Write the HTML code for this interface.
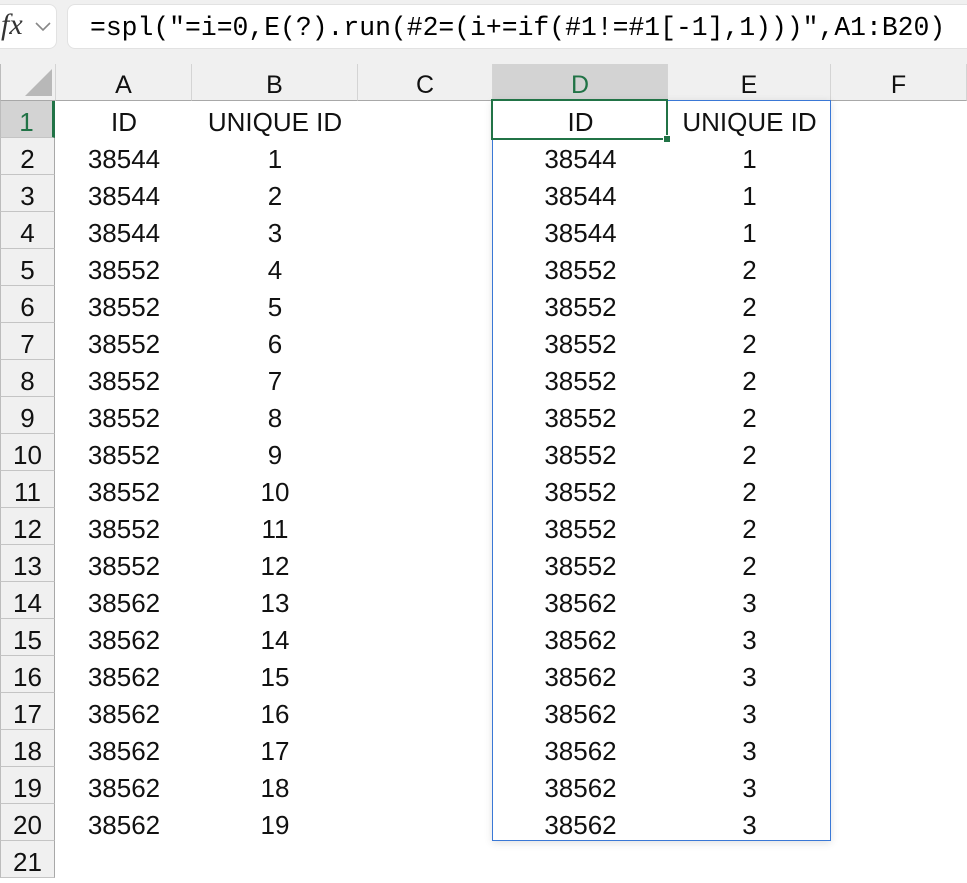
<!DOCTYPE html>
<html><head><meta charset="utf-8"><style>
*{margin:0;padding:0;box-sizing:border-box}
body{width:967px;height:877px;overflow:hidden;background:#fff;font-family:"Liberation Sans",sans-serif;position:relative}
.top{position:absolute;left:0;top:0;width:967px;height:64px;background:#f0f0f0}
.fxbox{position:absolute;left:-10px;top:4px;width:67px;height:45px;background:#fff;border:1px solid #e2e2e2;border-radius:8px}
.fbox{position:absolute;left:67px;top:4px;width:910px;height:45px;background:#fff;border:1px solid #e2e2e2;border-radius:8px;font-family:"Liberation Mono",monospace;font-size:26.4px;line-height:47px;padding-left:22px;color:#000;white-space:nowrap}
.hdr{position:absolute;top:64px;height:37px;background:#f0f0f0;border-right:1px solid #d4d4d4;border-bottom:1px solid #a8a8a8;text-align:center;font-size:25px;line-height:42px;color:#111}
.rh{position:absolute;left:0;width:55px;height:37px;background:#f0f0f0;border-left:1px solid #bcbcbc;border-right:1px solid #a8a8a8;border-bottom:1px solid #c4c4c4;text-align:center;font-size:26px;line-height:42px;color:#111}
.c{position:absolute;height:37px;text-align:center;font-size:26px;line-height:42px;color:#111}
</style></head><body>
<div class="top"></div>
<div class="fxbox"><span style="position:absolute;left:10px;top:3px;font-family:'Liberation Serif',serif;font-style:italic;font-size:30px;color:#333">fx</span>
<svg style="position:absolute;left:44px;top:17px" width="16" height="10"><path d="M1 1 L8 8 L15 1" stroke="#888" stroke-width="1.6" fill="none"/></svg></div>
<div class="fbox">=spl("=i=0,E(?).run(#2=(i+=if(#1!=#1[-1],1)))",A1:B20)</div>
<div class="hdr" style="left:0;width:56px;border-left:1px solid #bcbcbc"><svg style="position:absolute;left:22px;top:4px" width="30" height="30"><path d="M29 1 L29 28 L2 28 Z" fill="#b8b8b8"/></svg></div>
<div class="hdr" style="left:56px;width:136px">A</div>
<div class="hdr" style="left:192px;width:166px">B</div>
<div class="hdr" style="left:358px;width:135px">C</div>
<div class="hdr" style="left:493px;width:175px;background:#d3d3d3;color:#217346;border-bottom:1px solid #217346">D</div>
<div class="hdr" style="left:668px;width:163px">E</div>
<div class="hdr" style="left:831px;width:136px">F</div>
<div id="g"></div>
<div style="position:absolute;left:492px;top:100px;width:339px;height:741px;border:1px solid #3a78d6;box-shadow:0 2px 8px rgba(0,0,0,0.12)"></div>
<div style="position:absolute;left:491px;top:99px;width:177px;height:41px;border:2.5px solid #217346"></div>
<div style="position:absolute;left:663px;top:135px;width:8px;height:8px;background:#217346;border:1px solid #fff"></div>
<script>
var A=[38544,38544,38544,38552,38552,38552,38552,38552,38552,38552,38552,38552,38562,38562,38562,38562,38562,38562,38562];
var h='';
for(var r=1;r<=21;r++){var t=101+(r-1)*37;
var st=r==1?'background:#d3d3d3;color:#217346;border-right:3px solid #217346':'';
h+='<div class="rh" style="top:'+t+'px;'+st+'">'+r+'</div>';
var a,b,d,e;
if(r==1){a='ID';b='UNIQUE ID';d='ID';e='UNIQUE ID';}
else if(r<=20){a=A[r-2];b=r-1;d=A[r-2];e=A[r-2]==38544?1:A[r-2]==38552?2:3;}
else continue;
h+='<div class="c" style="left:56px;width:136px;top:'+t+'px">'+a+'</div>';
h+='<div class="c" style="left:192px;width:166px;top:'+t+'px">'+b+'</div>';
h+='<div class="c" style="left:493px;width:175px;top:'+t+'px">'+d+'</div>';
h+='<div class="c" style="left:668px;width:163px;top:'+t+'px">'+e+'</div>';}
document.getElementById('g').innerHTML=h;
</script>
</body></html>
